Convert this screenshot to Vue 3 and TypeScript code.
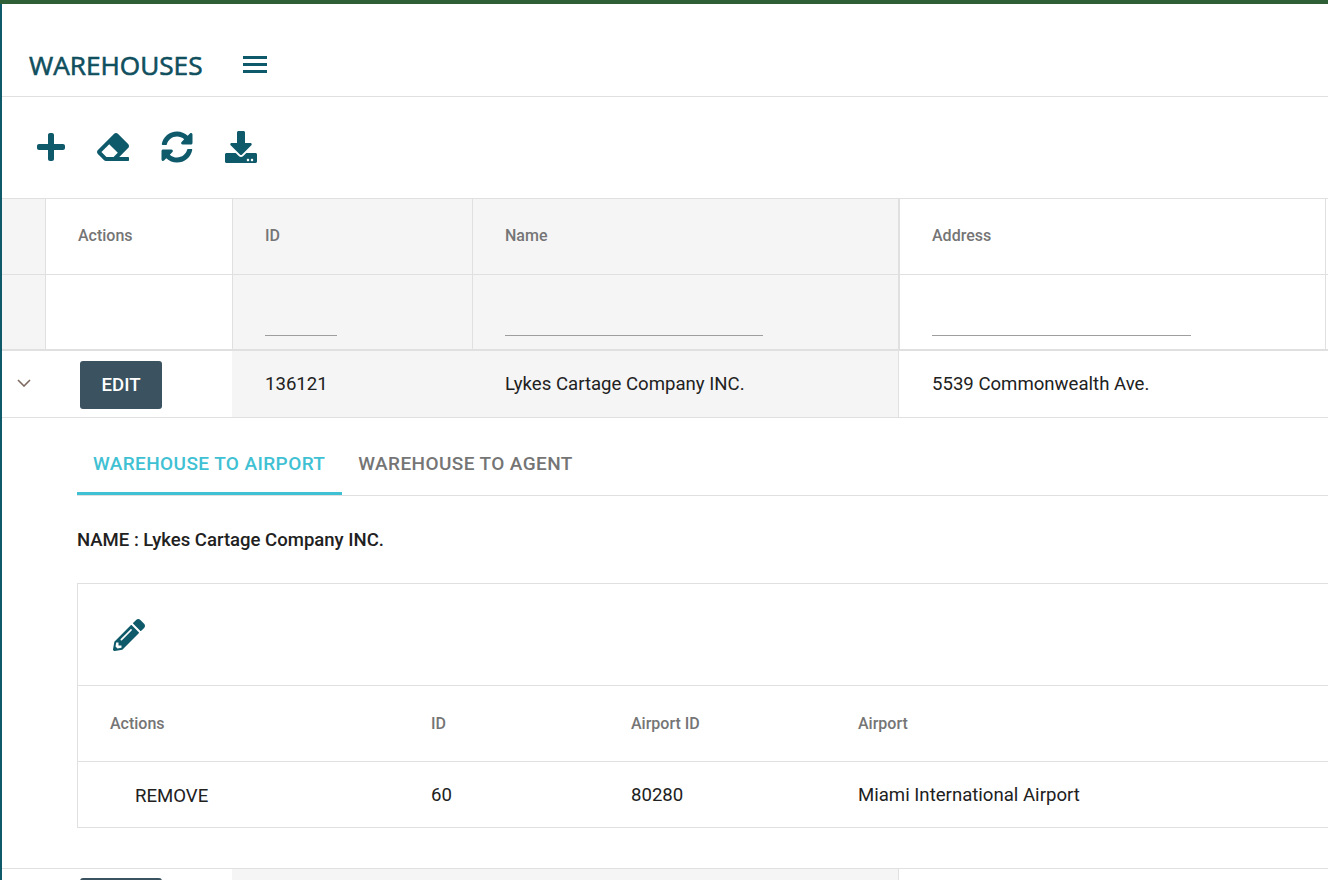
<script setup lang="ts">
interface Col { label: string; cls: string }
const cols: Col[] = [
  { label: '', cls: 'c-exp' },
  { label: 'Actions', cls: 'c-act' },
  { label: 'ID', cls: 'c-id' },
  { label: 'Name', cls: 'c-name' },
  { label: 'Address', cls: 'c-addr' },
  { label: '', cls: 'c-rest' }
]
const inner = [
  { label: 'Actions', value: 'REMOVE' },
  { label: 'ID', value: '60' },
  { label: 'Airport ID', value: '80280' },
  { label: 'Airport', value: 'Miami International Airport' }
]
</script>

<template>
  <div class="page">
    <div class="topbar"></div>
    <div class="main">
      <header class="head">
        <h1 class="title">WAREHOUSES</h1>
        <div class="burger"><i></i><i></i><i></i></div>
      </header>
      <div class="toolbar">
        <svg class="ic plus" viewBox="0 0 448 512"><path d="M416 208H272V64c0-17.67-14.33-32-32-32h-32c-17.67 0-32 14.33-32 32v144H32c-17.67 0-32 14.33-32 32v32c0 17.67 14.33 32 32 32h144v144c0 17.67 14.33 32 32 32h32c17.67 0 32-14.33 32-32V304h144c17.67 0 32-14.33 32-32v-32c0-17.67-14.33-32-32-32z"/></svg>
        <svg class="ic" viewBox="0 0 512 512"><path d="M497.941 273.941c18.745-18.745 18.745-49.137 0-67.882l-160-160c-18.745-18.745-49.136-18.746-67.883 0l-256 256c-18.745 18.745-18.745 49.137 0 67.882l96 96A48.004 48.004 0 0 0 144 480h356c6.627 0 12-5.373 12-12v-40c0-6.627-5.373-12-12-12H355.883l142.058-142.059zm-302.627-62.627l137.373 137.373L265.373 416H150.628l-80-80 124.686-124.686z"/></svg>
        <svg class="ic" viewBox="0 0 512 512"><path d="M370.72 133.28C339.458 104.008 298.888 87.962 255.848 88c-77.458.068-144.328 53.178-162.791 126.85-1.344 5.363-6.122 9.15-11.651 9.15H24.103c-7.498 0-13.194-6.807-11.807-14.176C33.933 94.924 134.813 8 256 8c66.448 0 126.791 26.136 171.315 68.685L463.03 40.97C478.149 25.851 504 36.559 504 57.941V192c0 13.255-10.745 24-24 24H345.941c-21.382 0-32.09-25.851-16.971-40.971l41.75-41.749zM32 296h134.059c21.382 0 32.09 25.851 16.971 40.971l-41.75 41.75c31.262 29.273 71.835 45.319 114.876 45.28 77.418-.07 144.315-53.144 162.787-126.849 1.344-5.363 6.122-9.15 11.651-9.15h57.304c7.498 0 13.194 6.807 11.807 14.176C478.067 417.076 377.187 504 256 504c-66.448 0-126.791-26.136-171.315-68.685L48.97 471.03C33.851 486.149 8 475.441 8 454.059V320c0-13.255 10.745-24 24-24z"/></svg>
        <svg class="ic" viewBox="0 0 512 512"><path d="M216 0h80c13.3 0 24 10.7 24 24v168h87.7c17.8 0 26.7 21.5 14.1 34.1L269.7 378.3c-7.5 7.5-19.8 7.5-27.3 0L90.1 226.1c-12.6-12.6-3.7-34.1 14.1-34.1H192V24c0-13.3 10.7-24 24-24zm296 376v112c0 13.3-10.7 24-24 24H24c-13.3 0-24-10.7-24-24V376c0-13.3 10.7-24 24-24h146.7l49 49c20.1 20.1 52.5 20.1 72.6 0l49-49H488c13.3 0 24 10.7 24 24zm-124 88c0-11-9-20-20-20s-20 9-20 20 9 20 20 20 20-9 20-20zm64 0c0-11-9-20-20-20s-20 9-20 20 9 20 20 20 20-9 20-20z"/></svg>
      </div>

      <div class="row row-head">
        <div v-for="c in cols" :key="c.cls" class="cell" :class="c.cls">{{ c.label }}</div>
      </div>
      <div class="row row-filter">
        <div class="cell c-exp"></div>
        <div class="cell c-act"></div>
        <div class="cell c-id"><span class="line w72"></span></div>
        <div class="cell c-name"><span class="line w258"></span></div>
        <div class="cell c-addr"><span class="line w259"></span></div>
        <div class="cell c-rest"></div>
      </div>
      <div class="row row-body">
        <div class="cell c-exp chev">
          <svg width="14" height="8" viewBox="0 0 14 8"><path d="M1 1l6 6 6-6" fill="none" stroke="#7d6a5f" stroke-width="1.6"/></svg>
        </div>
        <div class="cell c-act"><button class="edit">EDIT</button></div>
        <div class="cell c-id">136121</div>
        <div class="cell c-name">Lykes Cartage Company INC.</div>
        <div class="cell c-addr">5539 Commonwealth Ave.</div>
        <div class="cell c-rest"></div>
      </div>

      <section class="detail">
        <div class="tabs">
          <div class="tab active">WAREHOUSE TO AIRPORT</div>
          <div class="tab">WAREHOUSE TO AGENT</div>
        </div>
        <p class="name">NAME : Lykes Cartage Company INC.</p>
        <div class="card">
          <div class="card-tools">
            <svg class="ic" viewBox="0 0 512 512"><path d="M497.9 142.1l-46.1 46.1c-4.7 4.7-12.3 4.7-17 0l-111-111c-4.7-4.7-4.7-12.3 0-17l46.1-46.1c18.7-18.7 49.1-18.7 67.9 0l60.1 60.1c18.8 18.7 18.8 49.1 0 67.9zM284.2 99.8L21.6 362.4.4 483.9c-2.9 16.4 11.4 30.6 27.8 27.8l121.5-21.3 262.6-262.6c4.7-4.7 4.7-12.3 0-17l-111-111c-4.8-4.7-12.4-4.7-17.1 0zM124.1 339.9c-5.5-5.5-5.5-14.3 0-19.8l154-154c5.5-5.5 14.3-5.5 19.8 0s5.5 14.3 0 19.8l-154 154c-5.5 5.5-14.3 5.5-19.8 0zM88 424h48v36.3l-64.5 11.3-31.1-31.1L51.7 376H88v48z"/></svg>
          </div>
          <div class="irow ihead">
            <div v-for="i in inner" :key="i.label">{{ i.label }}</div>
          </div>
          <div class="irow ibody">
            <div v-for="(i, n) in inner" :key="i.label" :class="{ remove: n === 0 }">{{ i.value }}</div>
          </div>
        </div>
      </section>

      <div class="row row-body row-next">
        <div class="cell c-exp"></div>
        <div class="cell c-act"><button class="edit">EDIT</button></div>
        <div class="cell c-id"></div>
        <div class="cell c-name"></div>
        <div class="cell c-addr"></div>
        <div class="cell c-rest"></div>
      </div>
    </div>
  </div>
</template>

<style>
html, body { margin: 0; background: #fff; overflow: hidden; }
</style>

<style scoped>
.page { width: 1328px; height: 880px; overflow: hidden; display: flex; flex-direction: column; font-family: Roboto, sans-serif; color: #212121; }
.topbar { height: 4px; flex: none; background: #2f5f37; }
.main { flex: 1; border-left: 2px solid #0f5a6a; box-sizing: border-box; min-height: 0; }
.head { height: 93px; box-sizing: border-box; border-bottom: 1px solid #e0e0e0; display: flex; align-items: flex-start; padding: 44px 0 0 27px; }
.title { margin: 0; font: 400 26.2px/34px "Open Sans", sans-serif; -webkit-text-stroke: .6px #0f4f5e; color: #0f4f5e; letter-spacing: 0; }
.burger { margin: 8px 0 0 40px; width: 24px; display: flex; flex-direction: column; gap: 4px; }
.burger i { display: block; height: 3px; background: #0f5a6a; }
.toolbar { height: 101px; box-sizing: border-box; display: flex; align-items: center; gap: 32px; padding: 0 0 2px 35px; }
.ic { width: 32px; height: 32px; fill: #0f5a6a; display: block; flex: none; }
.ic.plus { width: 28px; }
.row { display: grid; grid-template-columns: 44px 187px 240px 426px 427px 1fr; box-sizing: border-box; }
.cell { box-sizing: border-box; border-right: 1px solid #e0e0e0; display: flex; align-items: center; }
.row-head { height: 77px; border-top: 1px solid #e0e0e0; border-bottom: 1px solid #e0e0e0; font-size: 16px; font-weight: 500; color: #757575; }
.row-head .cell { padding-bottom: 2px; }
.row-filter { height: 76px; border-bottom: 2px solid #e0e0e0; }
.row-head .c-exp, .row-filter .c-exp, .row-head .c-id, .row-filter .c-id, .row-head .c-name, .row-filter .c-name { background: #f5f5f5; }
.row-head .c-name, .row-filter .c-name { border-right-width: 2px; margin-right: -1px; }
.c-act { padding-left: 32px; }
.c-id, .c-name { padding-left: 32px; }
.c-addr { padding-left: 33px; }
.c-rest { border-right: 0; }
.row-filter .cell { align-items: flex-end; padding-bottom: 13px; }
.line { display: block; height: 1px; background: #9e9e9e; }
.w72 { width: 72px; } .w258 { width: 258px; } .w259 { width: 259px; }
.row-body { height: 67px; border-bottom: 1px solid #e0e0e0; font-size: 18.6px; }
.row-body .c-act { padding-top: 1px; }
.row-body .c-exp, .row-body .c-act { border-right: 0; }
.row-body .c-id, .row-body .c-name { background: #f5f5f5; }
.row-body .c-id { border-right: 0; margin-left: -1px; padding-left: 33px; }
.row-body .c-addr, .row-body .c-rest { border-right: 0; }
.row-body .chev { padding-bottom: 2px; }
.chev { justify-content: flex-start; padding-left: 15px; }
.edit { width: 82px; height: 48px; margin: 0 0 0 2px; border: 0; border-radius: 3px; background: #3b5260; color: #fff; font: 500 18.6px Roboto, sans-serif; padding: 0; }
.detail { height: 450px; box-sizing: border-box; padding-left: 75px; }
.tabs { height: 78px; box-sizing: border-box; display: flex; align-items: stretch; border-bottom: 1px solid #e0e0e0; }
.tab { padding: 14px 17px 0 16px; display: flex; align-items: center; font-size: 19px; font-weight: 500; letter-spacing: .4px; color: #757575; box-sizing: border-box; }
.tab.active { color: #40c1d3; border-bottom: 3px solid #40c1d3; padding-top: 17px; }
.name { margin: 0; height: 87px; box-sizing: border-box; padding-top: 33px; font-size: 18.55px; font-weight: 500; line-height: 22px; }
.card { border: 1px solid #e0e0e0; border-right: 0; height: 245px; box-sizing: border-box; }
.card-tools { height: 102px; box-sizing: border-box; border-bottom: 1px solid #e0e0e0; padding: 35px 0 0 35px; }
.irow { display: grid; grid-template-columns: 321px 200px 227px 1fr; padding-left: 32px; align-items: center; box-sizing: border-box; }
.ihead { height: 76px; border-bottom: 1px solid #e0e0e0; font-size: 16px; font-weight: 500; color: #757575; }
.ibody { height: 65px; font-size: 18.6px; }
.remove { padding: 2px 0 0 25px; }
.row-next { border-top: 1px solid #e0e0e0; }
</style>
